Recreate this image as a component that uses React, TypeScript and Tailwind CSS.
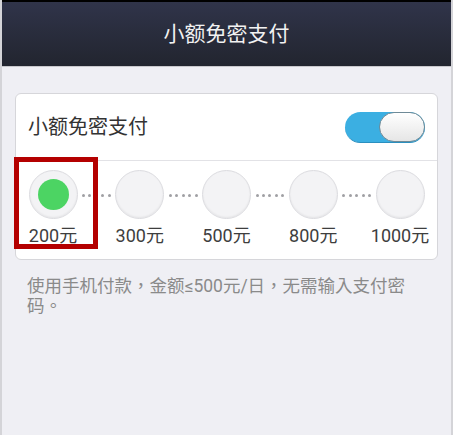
import React from 'react';

const FONT = "font-['Roboto','Noto_Sans_CJK_SC',sans-serif]";

const amounts = ['200元', '300元', '500元', '800元', '1000元'];

const Dots: React.FC = () => (
  <div className="flex h-[50px] flex-1 items-center justify-between px-[5px]">
    {[0, 1, 2, 3, 4].map((i) => (
      <span key={i} className="h-[3px] w-[3px] rounded-full bg-[#a0a0a4]" />
    ))}
  </div>
);

const Step: React.FC<{ label: string; active?: boolean }> = ({ label, active }) => (
  <div className="relative flex w-[48px] flex-col items-center">
    <div className="flex h-[49px] w-[49px] shrink-0 items-center justify-center rounded-full border border-[#dcdce0] bg-[#f3f3f5] shadow-[inset_0_-1px_2px_rgba(0,0,0,0.06)]">
      {active && <div className="h-[31px] w-[31px] rounded-full bg-[#4cd463]" />}
    </div>
    <span className="mt-[5px] whitespace-nowrap text-[18px] leading-[24px] text-[#3e3e3e]">{label}</span>
  </div>
);

export default function App() {
  return (
    <div className={`${FONT} h-[435px] w-[453px] overflow-hidden border-x-2 border-[#d4d4d8] bg-[#efeff4]`}>
      <div className="flex h-[67px] items-center justify-center border-t-2 border-b border-t-black border-b-[#c8c8cc] bg-gradient-to-b from-[#30344a] to-[#22252f]">
        <span className="text-[21px] leading-none text-[#f2f2f2]">小额免密支付</span>
      </div>

      <div className="px-[13px] pt-[26px]">
        <div className="rounded-[6px] border border-[#d6d6da] bg-white">
          <div className="flex h-[66px] items-center justify-between pl-[12px] pr-[12px]">
            <span className="text-[20px] leading-none text-[#333]">小额免密支付</span>
            <div className="relative h-[31px] w-[80px] rounded-full border-b border-[#2a8fbf] bg-[#3bafe2]">
              <div className="absolute right-0 top-0 h-[30px] w-[46px] rounded-full border border-[#6f8a97] bg-gradient-to-b from-white to-[#e6e6e6]" />
            </div>
          </div>
          <div className="h-px bg-[#e2e2e6]" />
          <div className="relative flex items-start px-[13px] pb-[11px] pt-[9px]">
            <Step label={amounts[0]} active />
            <Dots />
            <Step label={amounts[1]} />
            <Dots />
            <Step label={amounts[2]} />
            <Dots />
            <Step label={amounts[3]} />
            <Dots />
            <Step label={amounts[4]} />
            <div className="absolute left-[-2px] top-[-4px] h-[92px] w-[84px] border-[5px] border-[#b40000]" />
          </div>
        </div>

        {/* TC face puts the full-width commas in the middle of the cell, as in the screenshot */}
        <p className="mt-[16px] w-[400px] pl-[12px] font-['Roboto','Noto_Sans_CJK_TC',sans-serif] text-[17.5px] leading-[20px] text-[#8a8a8a]">
          使用手机付款，金额≤500元/日，无需输入支付密码。
        </p>
      </div>
    </div>
  );
}
